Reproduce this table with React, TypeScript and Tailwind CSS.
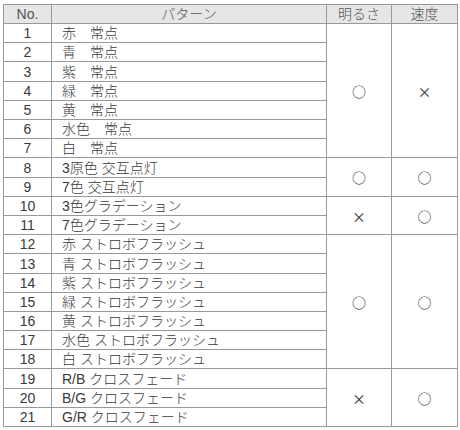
import React from "react";

const rows: { no: number; name: string }[] = [
  { no: 1, name: "赤　常点" },
  { no: 2, name: "青　常点" },
  { no: 3, name: "紫　常点" },
  { no: 4, name: "緑　常点" },
  { no: 5, name: "黄　常点" },
  { no: 6, name: "水色　常点" },
  { no: 7, name: "白　常点" },
  { no: 8, name: "3原色 交互点灯" },
  { no: 9, name: "7色 交互点灯" },
  { no: 10, name: "3色グラデーション" },
  { no: 11, name: "7色グラデーション" },
  { no: 12, name: "赤 ストロボフラッシュ" },
  { no: 13, name: "青 ストロボフラッシュ" },
  { no: 14, name: "紫 ストロボフラッシュ" },
  { no: 15, name: "緑 ストロボフラッシュ" },
  { no: 16, name: "黄 ストロボフラッシュ" },
  { no: 17, name: "水色 ストロボフラッシュ" },
  { no: 18, name: "白 ストロボフラッシュ" },
  { no: 19, name: "R/B クロスフェード" },
  { no: 20, name: "B/G クロスフェード" },
  { no: 21, name: "G/R クロスフェード" },
];

const groups: { start: number; span: number; bright: string; speed: string }[] = [
  { start: 1, span: 7, bright: "○", speed: "×" },
  { start: 8, span: 2, bright: "○", speed: "○" },
  { start: 10, span: 2, bright: "×", speed: "○" },
  { start: 12, span: 7, bright: "○", speed: "○" },
  { start: 19, span: 3, bright: "×", speed: "○" },
];

const spanClass: Record<number, string> = {
  2: "row-span-2",
  3: "row-span-3",
  7: "row-span-7",
};

const cjk = { fontFamily: '"Noto Sans CJK JP", sans-serif' };

export default function App() {
  return (
    <div
      className="w-[460px] h-[430px] bg-white pl-[3px] pt-[4px]"
      style={{ fontFamily: '"Liberation Sans", "Noto Sans CJK JP", sans-serif' }}
    >
      <div className="grid w-[455px] grid-cols-[47px_274px_64px_65px] grid-rows-[18px_18px_18px_19px_18px_18px_18px_18px_19px_18px_18px_18px_18px_19px_18px_18px_18px_18px_18px_19px_18px_18px] gap-px border border-[#999999] bg-[#999999] text-[14px] font-light leading-none text-[#3a3a3a]">
        <div className="flex items-center justify-center bg-[#e6e6e6] text-[#555555]">No.</div>
        <div className="flex items-center justify-center bg-[#e6e6e6] text-[#555555]">パターン</div>
        <div className="flex items-center justify-center bg-[#e6e6e6] text-[#555555]">明るさ</div>
        <div className="flex items-center justify-center bg-[#e6e6e6] text-[#555555]">速度</div>
        {rows.map((r) => {
          const g = groups.find((x) => x.start === r.no);
          return (
            <React.Fragment key={r.no}>
              <div className="col-start-1 flex items-center justify-center bg-white">{r.no}</div>
              <div className="col-start-2 flex items-center bg-white pl-[10px]">{r.name}</div>
              {g && (
                <>
                  <div
                    className={`col-start-3 flex items-center justify-center bg-white text-[14px] font-normal text-[#333333] ${spanClass[g.span]}`}
                    style={cjk}
                  >
                    {g.bright}
                  </div>
                  <div
                    className={`col-start-4 flex items-center justify-center bg-white text-[14px] font-normal text-[#333333] ${spanClass[g.span]}`}
                    style={cjk}
                  >
                    {g.speed}
                  </div>
                </>
              )}
            </React.Fragment>
          );
        })}
      </div>
    </div>
  );
}
